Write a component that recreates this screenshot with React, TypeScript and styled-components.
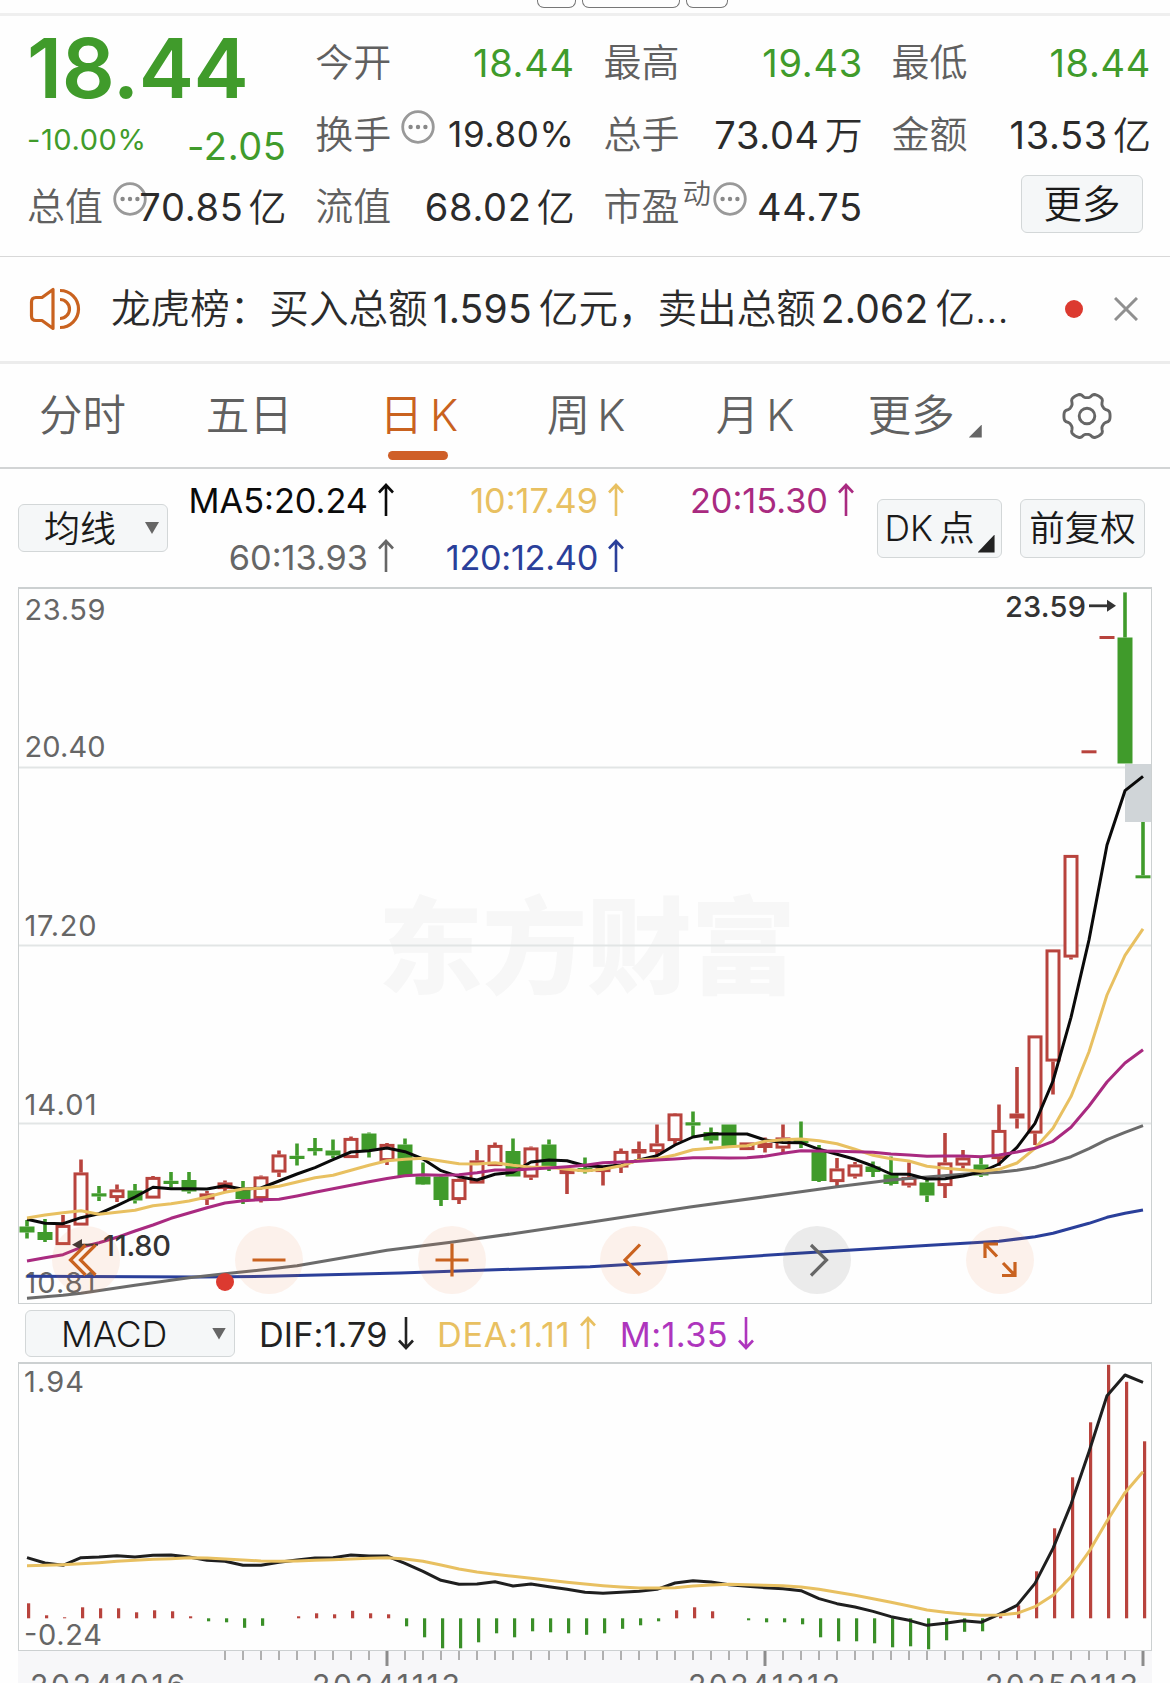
import React from 'react';
import styled, { createGlobalStyle } from 'styled-components';

const GREEN = '#409b2b';
const RED = '#b8433d';
const ORANGE = '#c9621f';
const GOLD = '#e8c061';
const MAGENTA = '#a92a80';
const BLUE = '#2a3f9a';
const VIOLET = '#ae35bd';
const GRAY = '#666';
const INK = '#2b2b2b';

const FONT = "Inter, 'Noto Sans CJK SC', sans-serif";

const GlobalStyle = createGlobalStyle`
  *, *::before, *::after { box-sizing: border-box; }
  html, body { margin: 0; padding: 0; background: #fefefe; }
  button { font: inherit; color: inherit; padding: 0; margin: 0; }
`;

const Page = styled.div`
  width: 1170px;
  height: 1683px;
  overflow: hidden;
  display: flex;
  flex-direction: column;
  background: #fefefe;
  color: ${INK};
  font-family: ${FONT};
  white-space: nowrap;
  svg { display: block; flex: none; }
`;

/* ---------- top strip ---------- */
const TopStrip = styled.div`
  height: 16px;
  flex: none;
  display: flex;
  gap: 6px;
  padding-left: 537px;
  border-bottom: 3px solid #efefef;
  align-items: flex-start;
`;
const Stub = styled.div<{ $w: number }>`
  width: ${p => p.$w}px;
  height: 8px;
  border: 1.5px solid #777;
  border-top: 0;
  border-radius: 0 0 7px 7px;
`;

/* ---------- quote ---------- */
const Quote = styled.section`
  height: 241px;
  flex: none;
  display: grid;
  grid-template-columns: repeat(4, 259.5px);
  column-gap: 28.7px;
  padding: 10px 0 0 27px;
  border-bottom: 1px solid #d8d8d8;
`;
const Column = styled.div`
  display: flex;
  flex-direction: column;
`;
const Cell = styled.div`
  height: 72px;
  display: flex;
  align-items: center;
  justify-content: space-between;
  line-height: 1;
`;
const Label = styled.div`
  display: flex;
  align-items: center;
  font-size: 38px;
  font-weight: 350;
  color: #606060;
`;
const Sup = styled.span`
  font-size: 28.5px;
  margin: 0 0 23px 3px;
`;
const Value = styled.div<{ $tone?: string; $size?: number; $ls?: number }>`
  display: flex;
  align-items: center;
  gap: 5px;
  color: ${p => p.$tone || INK};
  font-size: ${p => p.$size || 38}px;
  letter-spacing: ${p => p.$ls ?? 0.7}px;
  padding-top: 1px;
`;
const Unit = styled.span`
  font-size: 38px;
  font-weight: 350;
  letter-spacing: 0;
`;
const Price = styled.div`
  font-size: 83px;
  font-weight: 600;
  letter-spacing: -0.4px;
  color: ${GREEN};
  padding-top: 12px;
`;
const Change = styled(Cell)`
  color: ${GREEN};
  font-size: 29px;
  letter-spacing: 0.6px;
  padding-top: 10px;
`;
const Delta = styled.span`
  font-size: 38px;
  padding-top: 13px;
`;
const InfoIcon = styled.svg<{ $gap: number }>`
  margin: 0 -14px 14px ${p => p.$gap}px;
`;
const MoreCell = styled(Cell)`
  justify-content: flex-end;
  padding: 0 8px 5px 0;
`;
const SoftButton = styled.button<{ $w: number; $h: number; $size: number }>`
  width: ${p => p.$w}px;
  height: ${p => p.$h}px;
  flex: none;
  display: flex;
  align-items: center;
  justify-content: center;
  padding-top: 2px;
  background: #f5f7f8;
  border: 1.5px solid #d3d7d8;
  border-radius: 6px;
  font-size: ${p => p.$size}px;
  font-weight: 350;
  line-height: 1;
  color: #1a1a1a;
`;

/* ---------- notice ---------- */
const Notice = styled.section`
  height: 107px;
  flex: none;
  display: flex;
  align-items: center;
  padding: 0 32px 0 29px;
  border-bottom: 3px solid #ececec;
`;
const NoticeText = styled.p`
  flex: 1;
  margin: 0 0 0 29px;
  font-size: 39.6px;
  font-weight: 350;
  line-height: 1;
  color: #2b2b2b;
`;
const Figure = styled.span`
  font-size: 39px;
  font-weight: 400;
  letter-spacing: 0.2px;
  margin: 0 7px 0 5px;
`;
const Dot = styled.i`
  width: 18px;
  height: 18px;
  border-radius: 50%;
  background: #dc3a30;
  margin-right: 31px;
`;

/* ---------- tabs ---------- */
const Tabs = styled.nav`
  height: 105px;
  flex: none;
  display: grid;
  grid-template-columns: repeat(7, 1fr);
  border-bottom: 2px solid #d2d4d5;
`;
const Tab = styled.div<{ $active?: boolean; $shift?: number }>`
  position: relative;
  display: flex;
  align-items: center;
  justify-content: center;
  gap: 7px;
  padding-left: ${p => Math.max(p.$shift || 0, 0)}px;
  padding-right: ${p => Math.max(-(p.$shift || 0), 0)}px;
  font-size: 43.5px;
  font-weight: 350;
  line-height: 1;
  color: ${p => (p.$active ? ORANGE : '#606060')};
  &::after {
    content: '';
    display: ${p => (p.$active ? 'block' : 'none')};
    position: absolute;
    left: 50%;
    bottom: 7px;
    width: 60px;
    height: 9px;
    margin-left: -30px;
    border-radius: 5px;
    background: #cf5f28;
  }
`;
const TabCorner = styled.i`
  display: block;
  width: 13px;
  height: 13px;
  margin: 31px 0 0 7px;
  background: #666;
  clip-path: polygon(100% 0, 100% 100%, 0 100%);
`;

/* ---------- indicator rows ---------- */
const MaRow = styled.section`
  height: 118px;
  flex: none;
  display: flex;
  align-items: center;
  padding-left: 18px;
`;
const Select = styled(SoftButton)`
  justify-content: space-between;
`;
const MenuName = styled.span<{ $l: number }>`
  padding-left: ${p => p.$l}px;
`;
const Caret = styled.i`
  display: block;
  width: 14px;
  height: 12px;
  margin: 0 8px 2px 0;
  background: #666;
  clip-path: polygon(0 0, 100% 0, 50% 100%);
`;
const Legend = styled.div`
  display: grid;
  grid-template-columns: 226px 230px 230px;
  grid-auto-rows: 56.6px;
  width: 708.5px;
`;
const Reading = styled.div<{ $tone: string; $ls?: number }>`
  display: flex;
  align-items: center;
  justify-content: flex-end;
  gap: 10px;
  font-size: 34.3px;
  line-height: 1;
  letter-spacing: ${p => p.$ls || 0}px;
  color: ${p => p.$tone};
`;
const ReadingText = styled.span`
  padding-top: 3px;
`;
const DkButton = styled(SoftButton)`
  justify-content: flex-start;
  padding-left: 7px;
  gap: 6px;
  margin-right: 18.5px;
`;
const DkCorner = styled.i`
  display: block;
  width: 17px;
  height: 18px;
  margin-left: -3px;
  margin-bottom: 4px;
  align-self: flex-end;
  background: #222;
  clip-path: polygon(100% 0, 100% 100%, 0 100%);
`;
const MacdRow = styled.section`
  height: 58px;
  flex: none;
  display: flex;
  align-items: center;
  padding: 1px 0 0 25px;
`;
const MacdReadings = styled.div`
  display: flex;
  gap: 23.5px;
  margin-left: 24px;
`;

/* ---------- charts ---------- */
const Chart = styled.section<{ $h: number }>`
  position: relative;
  height: ${p => p.$h}px;
  width: 1134px;
  margin-left: 18px;
  flex: none;
  border: 1px solid #ccd0d1;
  border-top-width: 2px;
`;
const Canvas = styled.svg`
  position: absolute;
  left: -1px;
  top: -2px;
`;
const Controls = styled.div`
  position: absolute;
  left: 33px;
  right: 117px;
  bottom: 9.5px;
  display: flex;
  justify-content: space-between;
`;
const RoundButton = styled.button<{ $muted?: boolean }>`
  width: 68px;
  height: 68px;
  border: 0;
  border-radius: 50%;
  background: ${p => (p.$muted ? 'rgba(70,70,70,0.1)' : 'rgba(238,125,70,0.1)')};
  color: ${p => (p.$muted ? '#666' : ORANGE)};
  display: flex;
  align-items: center;
  justify-content: center;
`;
const Axis = styled.footer`
  flex: 1;
  width: 1134px;
  margin-left: 18px;
  background: #f7f7f9;
`;

/* ---------- data ---------- */
type Candle = [kind: 'g' | 'r' | 'f', high: number, top: number, bottom: number, low: number];

const candles: Candle[] = [
  ['g', 1220, 1226.5, 1232.5, 1238.5], ['g', 1219, 1232, 1240, 1242], ['r', 1215, 1225, 1245, 1245],
  ['r', 1159.5, 1172.5, 1225.5, 1225.5], ['g', 1186, 1193.3, 1196.5, 1201], ['r', 1184.5, 1189.5, 1198, 1202],
  ['g', 1184, 1190.5, 1200.5, 1203.5], ['r', 1176, 1177, 1198.5, 1198.5], ['g', 1172, 1180.8, 1184, 1187.5],
  ['g', 1172, 1180, 1191.5, 1193.5], ['r', 1191, 1193.5, 1199.5, 1205], ['r', 1180.5, 1182.5, 1189, 1192],
  ['g', 1181, 1188.5, 1199, 1204], ['r', 1175.5, 1176.5, 1199, 1202.5], ['r', 1150.5, 1154.5, 1172.5, 1177],
  ['g', 1143.5, 1155.8, 1159, 1165.5], ['g', 1138, 1148, 1151.2, 1155.5], ['g', 1139.5, 1150.5, 1155.5, 1158],
  ['r', 1136.5, 1138, 1158, 1158], ['g', 1132.5, 1133.5, 1150.5, 1157.5], ['r', 1143, 1144, 1161, 1165],
  ['g', 1138.5, 1144.5, 1176, 1176.5], ['g', 1162.5, 1176.5, 1184.5, 1185], ['g', 1175.5, 1176.5, 1200, 1206],
  ['r', 1178.5, 1179, 1200, 1204], ['r', 1150, 1160.5, 1183.5, 1183.5], ['r', 1142.5, 1145, 1166, 1166],
  ['g', 1138.5, 1151, 1176.5, 1176.5], ['r', 1146.5, 1147.5, 1177.5, 1180], ['g', 1139.5, 1144.5, 1167, 1171],
  ['r', 1167.5, 1169, 1174, 1194], ['g', 1157.5, 1168, 1172, 1173.5], ['r', 1166, 1168, 1172, 1185.5],
  ['r', 1148.5, 1151, 1167.5, 1173], ['f', 1141.5, 1149, 1153.5, 1159], ['r', 1124.5, 1143.5, 1152, 1155],
  ['r', 1113, 1113.5, 1141, 1144], ['g', 1111.5, 1122.3, 1125.5, 1136.5], ['g', 1127.5, 1132, 1140.5, 1143.5],
  ['g', 1124.5, 1124.5, 1147, 1147], ['r', 1142.5, 1142.5, 1150, 1150], ['f', 1137.5, 1143, 1148, 1152.5],
  ['r', 1124.5, 1137.5, 1148.5, 1152], ['g', 1121.5, 1139.8, 1143, 1148], ['g', 1145, 1150, 1181, 1182],
  ['r', 1158, 1168.5, 1182, 1186], ['r', 1162, 1164.5, 1176.5, 1178.5], ['g', 1161.5, 1166.5, 1172, 1177],
  ['g', 1156.5, 1174.5, 1184, 1185.5], ['r', 1162.5, 1177, 1185.5, 1187.5], ['g', 1179.5, 1182.5, 1195.5, 1202],
  ['r', 1133, 1162.5, 1186, 1198], ['r', 1150, 1157.5, 1165.5, 1168.5], ['g', 1156, 1164.5, 1175.5, 1177],
  ['r', 1104.5, 1130, 1159, 1166], ['f', 1067, 1113.5, 1118.5, 1128.5], ['r', 1035.5, 1035.5, 1133.5, 1145],
  ['r', 949.5, 949.5, 1061.5, 1094.5], ['r', 855, 855, 957.5, 959.5], ['f', 750.3, 750.3, 753.3, 753.3],
  ['f', 636, 636, 639, 639], ['g', 592.4, 637.5, 763.5, 763.5], ['g', 822, 875.3, 878.3, 878.3],
];

const ma5 = [
  1219.3, 1223.3, 1223.7, 1217.7, 1213.7, 1205.7, 1197, 1187.3, 1188.7, 1188.7, 1189, 1185.7, 1189.3, 1188, 1181,
  1174, 1167.7, 1159.7, 1152, 1150.7, 1148, 1151.7, 1159, 1170.7, 1176.7, 1180, 1174.3, 1172.3, 1162, 1160, 1160.7,
  1165.7, 1166.7, 1165, 1160, 1155.7, 1145, 1137, 1134, 1134, 1134, 1140, 1142.5, 1142.7, 1149.3, 1154.3, 1159.3,
  1166, 1174, 1174.3, 1179, 1178.7, 1176, 1172, 1164, 1147.3, 1123.3, 1081, 1017.3, 939.9, 845, 790.7, 776.3,
];
const ma10 = [
  1218, 1215, 1212.7, 1210.7, 1214.3, 1212.3, 1210.3, 1205.7, 1203.7, 1201, 1197, 1192.3, 1189, 1188.3, 1186.3,
  1182, 1177.7, 1175.3, 1170.3, 1165.3, 1160.7, 1159.3, 1158.3, 1161, 1163.7, 1164, 1162.7, 1165.3, 1167.3, 1167.3,
  1169.3, 1171, 1169.3, 1165.7, 1160, 1158.7, 1155, 1149.7, 1148.3, 1146.7, 1145.7, 1141.3, 1139.7, 1139, 1140.7,
  1143.7, 1149.3, 1155.3, 1158.7, 1161, 1166.3, 1168.3, 1169.7, 1171.3, 1169.3, 1163, 1148.3, 1128.3, 1096.6,
  1051.8, 995, 955.3, 928.8,
];
const ma20 = [
  1261, 1257.7, 1254.7, 1247.3, 1242.7, 1237.3, 1231, 1225, 1218.3, 1213, 1207.7, 1203, 1200.7, 1199.7, 1199.3,
  1196, 1192.3, 1188.7, 1185.3, 1181.7, 1178.5, 1175.7, 1174.7, 1175.3, 1174.7, 1172.7, 1170, 1170, 1169, 1168,
  1166.7, 1165.3, 1162.7, 1162, 1161.3, 1160, 1159, 1157.7, 1157.7, 1158, 1157.7, 1156.3, 1153.3, 1150.7, 1151,
  1151.3, 1151.7, 1152.3, 1154, 1155, 1156.3, 1156, 1156, 1156.7, 1155, 1152, 1148.3, 1141.3, 1127.3, 1106, 1082,
  1063, 1049.7,
];
const ma60: [number, number][] = [
  [27, 1298.3], [63, 1295.3], [81, 1293.3], [135, 1285.3], [189, 1277.7], [225, 1273.7], [261, 1270], [297, 1265.7],
  [387, 1250.3], [451, 1242.3], [513, 1233.7], [590, 1222.3], [690, 1207], [790, 1193.3], [837, 1186.7], [891, 1180],
  [927, 1177], [963, 1174.3], [999, 1172.3], [1017, 1170.3], [1035, 1167.3], [1053, 1162.3], [1071, 1156.7],
  [1089, 1148.7], [1107, 1139.7], [1125, 1132.3], [1143, 1125.7],
];
const ma120: [number, number][] = [
  [27, 1276.3], [200, 1277], [267, 1276.3], [400, 1273], [451, 1271.3], [590, 1266.7], [657, 1262.7], [790, 1253.7],
  [852, 1250], [930, 1245.3], [999, 1241.3], [1035, 1236.7], [1053, 1233.3], [1071, 1228.3], [1089, 1223.3],
  [1107, 1217.3], [1125, 1213.3], [1143, 1210],
];

const histogram = [
  15, 3, 1, 11, 10, 10, 6, 8, 7, 2, -3, -4, -9.5, -7.5, 0, 2, 5, 4, 7.5, 5, 4, -8, -19, -30, -30, -24, -15, -19, -13,
  -14, -15, -16.5, -15, -10.5, -7, -3, 8, 11, 7, 0, -2, -4, -4, -6, -19, -23, -23, -25, -29, -28, -31, -22, -13.5,
  -13, 2, 13, 47, 90, 141, 196, 253.5, 236.5, 177,
];
const dif = [
  773, 789, 796, 773, 771, 767, 771, 766, 765, 771, 781, 784, 796, 796, 787, 780, 774, 773, 765, 768, 768, 790, 814,
  841, 853, 852, 845, 858, 852, 860, 868, 877, 880, 877, 874, 868, 849, 842, 846, 854, 859, 863, 866, 872, 896, 911,
  921, 934, 950, 961, 976, 970, 962, 967, 943, 916, 850, 745, 613, 455, 287, 225, 247,
].map(v => 1300 + v / 3);
const dea = [
  797, 796, 794, 791, 788, 784, 781, 778, 776, 773, 774, 777, 780, 783, 784, 783, 781, 779, 777, 775, 773, 777, 784,
  795, 807, 816, 823, 829, 835, 841, 847, 852, 857, 861, 864, 864, 863, 858, 855, 853, 854, 856, 857, 861, 868, 877,
  886, 896, 907, 918, 930, 937, 942, 946, 945, 940, 920, 886, 830, 755, 663, 578, 515,
].map(v => 1300 + v / 3);

const xAt = (i: number) => 27 + 18 * i;
const series = (ys: number[]) => ys.map((y, i) => `${xAt(i)},${y}`).join(' ');
const pairs = (ps: [number, number][]) => ps.map(p => p.join(',')).join(' ');

/* ---------- small drawings ---------- */
const Info = ({ gap }: { gap: number }) => (
  <InfoIcon $gap={gap} width="34" height="34" viewBox="0 0 34 34">
    <circle cx="17" cy="17" r="15.3" fill="none" stroke="#999" strokeWidth="2.8" />
    <circle cx="9.6" cy="17" r="2.2" fill="#888" />
    <circle cx="17" cy="17" r="2.2" fill="#888" />
    <circle cx="24.4" cy="17" r="2.2" fill="#888" />
  </InfoIcon>
);

const Arrow = ({ down }: { down?: boolean }) => (
  <svg width="16" height="34" viewBox="0 0 16 34" fill="none" stroke="currentColor" strokeWidth="2.6">
    {down ? <path d="M8 1V32M1 24.500L8 32L15 24.500" /> : <path d="M8 33V2M1 9.500L8 2L15 9.500" />}
  </svg>
);

const Speaker = () => (
  <svg width="53" height="44" viewBox="0 0 53 44" fill="none" stroke={ORANGE} strokeWidth="3.2" strokeLinejoin="round">
    <path d="M24 2.500V41.500L13 33.500H7Q2.500 33.500 2.500 29V15Q2.500 10.500 7 10.500H13Z" />
    <path d="M31 12.500A9.500 9.500 0 0 1 31 31.500" />
    <path d="M31 3.500A18.500 18.500 0 0 1 31 40.500" />
  </svg>
);

const Cross = () => (
  <svg width="24" height="24" viewBox="0 0 24 24" stroke="#909090" strokeWidth="3">
    <path d="M1 1L23 23M23 1L1 23" />
  </svg>
);

const gearPath = (() => {
  const pts: string[] = [];
  const n = 96;
  for (let k = 0; k < n; k++) {
    const a = (k / n) * Math.PI * 2;
    const c = Math.cos(6 * a);
    const r = 20.6 + 2.5 * Math.tanh(2 * c + 0.5);
    pts.push(`${(25 + r * Math.cos(a)).toFixed(2)} ${(25 + r * Math.sin(a)).toFixed(2)}`);
  }
  return `M${pts.join('L')}Z`;
})();

const Gear = () => (
  <svg width="50" height="50" viewBox="0 0 50 50" fill="none" stroke="#666" strokeWidth="2.9">
    <path d={gearPath} strokeLinejoin="round" />
    <circle cx="25" cy="25" r="7.8" />
  </svg>
);

const Glyph = ({ d }: { d: string }) => (
  <svg width="40" height="40" viewBox="-20 -20 40 40" fill="none" stroke="currentColor" strokeWidth="3.2">
    <path d={d} />
  </svg>
);

const CandleMark = ({ c, i }: { c: Candle; i: number }) => {
  const [kind, high, top, bottom, low] = c;
  const x = xAt(i);
  const color = kind === 'g' ? GREEN : RED;
  return (
    <g stroke={color} strokeWidth="3.6">
      {high < top && <line x1={x} x2={x} y1={high} y2={top} />}
      {low > bottom && <line x1={x} x2={x} y1={bottom} y2={low} />}
      {kind === 'r' ? (
        <rect x={x - 6} y={top + 1.4} width="12" height={Math.max(bottom - top - 2.8, 1)} fill="#fefefe" strokeWidth="3" />
      ) : (
        <rect x={x - 7.5} y={top} width="15" height={bottom - top} fill={color} stroke="none" />
      )}
    </g>
  );
};

const axisLabels: [string, number, number][] = [
  ['23.59', 609, 81], ['20.40', 746, 81], ['17.20', 925, 72], ['14.01', 1104, 72], ['10.81', 1282.5, 71],
];

const chartText = { fontFamily: FONT, fontSize: 29, fill: '#666' };

const PriceChart = () => (
  <Chart $h={717}>
    <Canvas width="1134" height="717" viewBox="18 587 1134 717">
      <text x="378" y="985" fontFamily="'Noto Sans CJK SC', sans-serif" fontWeight="900" fontSize="105" textLength="418" fill="#f7f7f7">
        东方财富
      </text>
      {[767.5, 945.5, 1123.5].map(y => (
        <line key={y} x1="19" x2="1151" y1={y} y2={y} stroke="#e2e5e5" strokeWidth="2" />
      ))}
      {axisLabels.map(([t, y, w]) => (
        <text key={t} {...chartText} x="24.500" y={y + 10.5} textLength={w}>{t}</text>
      ))}
      <rect x="1125" y="764" width="26" height="58" fill="#d0d5d8" />
      {candles.map((c, i) => <CandleMark key={i} c={c} i={i} />)}
      <g fill="none" strokeWidth="3" strokeLinejoin="round">
        <polyline points={pairs(ma120)} stroke={BLUE} />
        <polyline points={pairs(ma60)} stroke="#6b6b6b" />
        <polyline points={series(ma5)} stroke="#0a0a0a" />
        <polyline points={series(ma10)} stroke={GOLD} />
        <polyline points={series(ma20)} stroke={MAGENTA} />
      </g>
      <circle cx="225" cy="1282" r="9" fill="#dc3a30" />
      <text {...chartText} x="1005" y="616.500" fontWeight="500" fill="#333" textLength="81">23.59</text>
      <path d="M1089 605.800H1107" stroke="#333" strokeWidth="2.8" />
      <path d="M1107 599.800L1116 605.800L1107 611.800Z" fill="#333" />
      <text {...chartText} x="103" y="1256" fontWeight="500" fill="#333" textLength="68">11.80</text>
      <path d="M80 1244.700H98" stroke="#333" strokeWidth="2" />
      <path d="M82 1239L72 1244.700L82 1250Z" fill="#333" />
    </Canvas>
    <Controls>
      <RoundButton><Glyph d="M-0.500 -15L-15.500 0L-0.500 15M9.500 -15L-5.500 0L9.500 15" /></RoundButton>
      <RoundButton><Glyph d="M-16.500 0H16.500" /></RoundButton>
      <RoundButton><Glyph d="M-16.500 0H16.500M0 -16.500V16.500" /></RoundButton>
      <RoundButton><Glyph d="M6 -15.500L-9 0L6 15" /></RoundButton>
      <RoundButton $muted><Glyph d="M-6 -15L9.500 0L-6 15.500" /></RoundButton>
      <RoundButton><Glyph d="M-2 -16H-15V-2M-15 -16L-3 -3.500M2 15.500H15V2M15 15.500L3 3" /></RoundButton>
    </Controls>
  </Chart>
);

const MacdChart = () => (
  <Chart $h={289}>
    <Canvas width="1134" height="289" viewBox="18 1362 1134 289">
      <text {...chartText} x="24" y="1392" textLength="60">1.94</text>
      <text {...chartText} x="24" y="1644.500" textLength="78">-0.24</text>
      {histogram.map((v, i) => (
        <rect key={i} x={xAt(i)} width="3.2" y={v > 0 ? 1618.3 - v : 1618.3} height={Math.abs(v)} fill={v > 0 ? RED : '#3a8f28'} />
      ))}
      <g fill="none" strokeWidth="3" strokeLinejoin="round">
        <polyline points={series(dif)} stroke="#1f1f1f" />
        <polyline points={series(dea)} stroke={GOLD} />
      </g>
    </Canvas>
  </Chart>
);

const dates: [string, number, number][] = [
  ['20241016', 30, 155], ['20241113', 312, 148], ['20241212', 688, 152], ['20250113', 985, 153],
];

const DateAxis = () => (
  <Axis>
    <svg width="1134" height="32" viewBox="18 1651 1134 32">
      {Array.from({ length: 52 }, (_, k) => k + 11).map(i => {
        const major = i === 20 || i === 41 || i === 62;
        return (
          <line key={i} x1={xAt(i)} x2={xAt(i)} y1="1651" y2={major ? 1666 : 1660} stroke={major ? '#8c8c8c' : '#a8a8a8'} strokeWidth={major ? 3 : 1.8} />
        );
      })}
      {dates.map(([t, x, w]) => (
        <text key={t} {...chartText} fontSize="30" x={x} y="1696" textLength={w}>{t}</text>
      ))}
    </svg>
  </Axis>
);

const LegendItem = ({ tone, text, ls, down }: { tone: string; text: string; ls?: number; down?: boolean }) => (
  <Reading $tone={tone} $ls={ls}>
    <ReadingText>{text}</ReadingText>
    <Arrow down={down} />
  </Reading>
);

export default function App() {
  return (
    <Page>
      <GlobalStyle />
      <TopStrip>
        <Stub $w={39} />
        <Stub $w={98} />
        <Stub $w={42} />
      </TopStrip>

      <Quote>
        <Column>
          <Cell><Price>18.44</Price></Cell>
          <Change><span>-10.00%</span><Delta>-2.05</Delta></Change>
          <Cell>
            <Label>总值<Info gap={10} /></Label>
            <Value>70.85<Unit>亿</Unit></Value>
          </Cell>
        </Column>
        <Column>
          <Cell><Label>今开</Label><Value $tone={GREEN}>18.44</Value></Cell>
          <Cell>
            <Label>换手<Info gap={9.5} /></Label>
            <Value $size={35}>19.80%</Value>
          </Cell>
          <Cell><Label>流值</Label><Value>68.02<Unit>亿</Unit></Value></Cell>
        </Column>
        <Column>
          <Cell><Label>最高</Label><Value $tone={GREEN}>19.43</Value></Cell>
          <Cell><Label>总手</Label><Value>73.04<Unit>万</Unit></Value></Cell>
          <Cell>
            <Label>市盈<Sup>动</Sup><Info gap={2} /></Label>
            <Value>44.75</Value>
          </Cell>
        </Column>
        <Column>
          <Cell><Label>最低</Label><Value $tone={GREEN}>18.44</Value></Cell>
          <Cell><Label>金额</Label><Value>13.53<Unit>亿</Unit></Value></Cell>
          <MoreCell><SoftButton $w={122} $h={58} $size={38.5}>更多</SoftButton></MoreCell>
        </Column>
      </Quote>

      <Notice>
        <Speaker />
        <NoticeText>
          龙虎榜：买入总额<Figure>1.595</Figure>亿元，卖出总额<Figure>2.062</Figure>亿<span style={undefined}>...</span>
        </NoticeText>
        <Dot />
        <Cross />
      </Notice>

      <Tabs>
        <Tab $shift={-2}>分时</Tab>
        <Tab $shift={-3}>五日</Tab>
        <Tab $active $shift={2}><span>日</span><span>K</span></Tab>
        <Tab $shift={2}><span>周</span><span>K</span></Tab>
        <Tab $shift={6}><span>月</span><span>K</span></Tab>
        <Tab $shift={11}><span>更多</span><TabCorner /></Tab>
        <Tab $shift={1}><Gear /></Tab>
      </Tabs>

      <MaRow>
        <Select $w={150} $h={48} $size={36}>
          <MenuName $l={25}>均线</MenuName><Caret />
        </Select>
        <Legend>
          <LegendItem tone="#0a0a0a" text="MA5:20.24" />
          <LegendItem tone={GOLD} text="10:17.49" />
          <LegendItem tone={MAGENTA} text="20:15.30" />
          <LegendItem tone={GRAY} text="60:13.93" />
          <LegendItem tone={BLUE} text="120:12.40" ls={-0.3} />
        </Legend>
        <DkButton $w={125} $h={59} $size={35.5}>
          <span>DK</span><span>点</span>
          <DkCorner />
        </DkButton>
        <SoftButton $w={125} $h={59} $size={35.5}>前复权</SoftButton>
      </MaRow>

      <PriceChart />

      <MacdRow>
        <Select $w={210} $h={47} $size={35.5}>
          <MenuName $l={35}>MACD</MenuName><Caret />
        </Select>
        <MacdReadings>
          <LegendItem tone="#222" text="DIF:1.79" ls={0.1} down />
          <LegendItem tone={GOLD} text="DEA:1.11" ls={0.7} />
          <LegendItem tone={VIOLET} text="M:1.35" ls={0.4} down />
        </MacdReadings>
      </MacdRow>

      <MacdChart />
      <DateAxis />
    </Page>
  );
}
